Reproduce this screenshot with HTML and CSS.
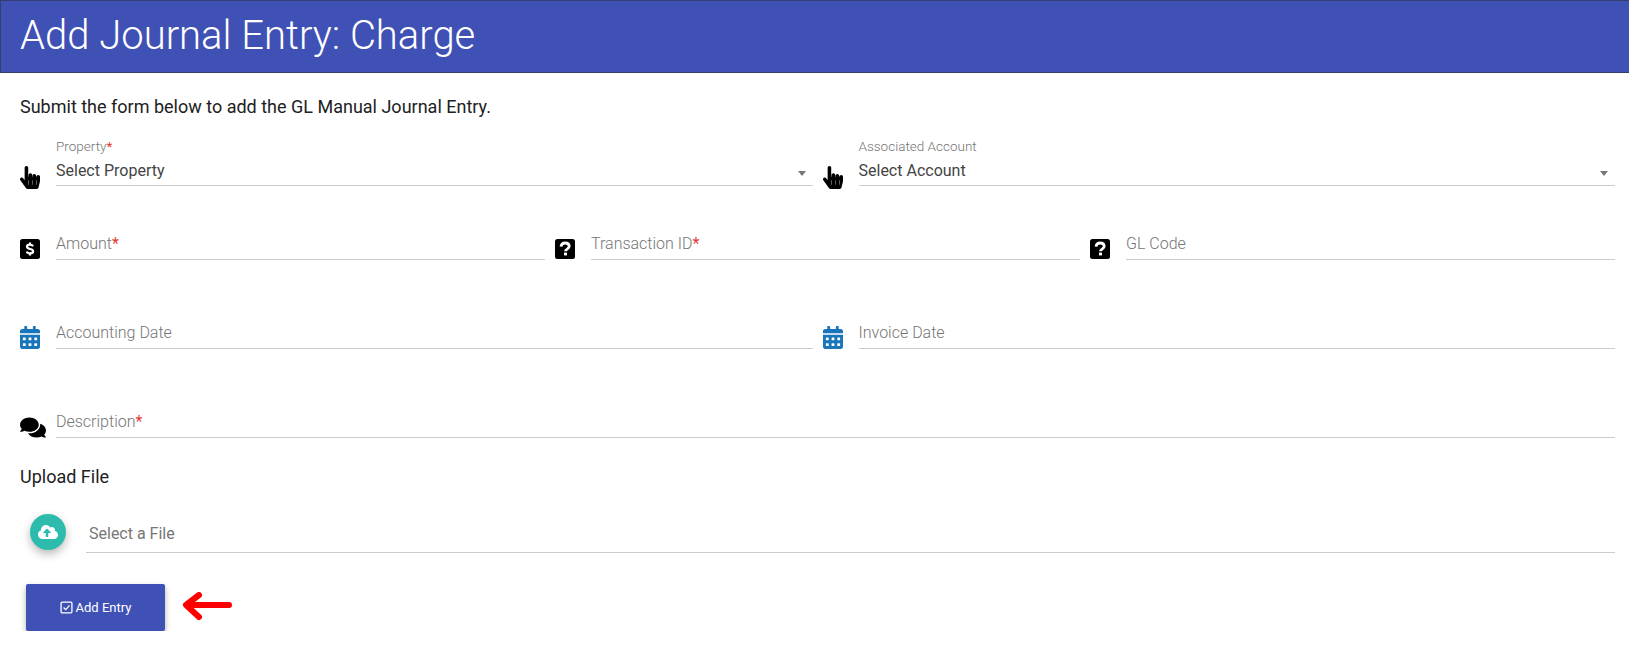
FILE: index.html
```html
<!DOCTYPE html>
<html lang="en">
<head>
    <meta charset="UTF-8">
    <meta name="viewport" content="width=device-width, initial-scale=1.0">
    <title>Add Journal Entry: Charge</title>
    <link rel="stylesheet" href="styles.css">
</head>
<body>
    <svg class="icon-defs" width="0" height="0">
        <symbol id="i-hand" viewBox="0 0 448 512"><path d="M448 240v96c0 3.084-.356 6.159-1.063 9.162l-32 136C410.686 499.23 394.562 512 376 512H168a40.004 40.004 0 0 1-32.35-16.473l-127.997-176c-12.993-17.866-9.043-42.883 8.822-55.876 17.867-12.994 42.884-9.043 55.877 8.823L104 315.992V40c0-22.091 17.908-40 40-40s40 17.909 40 40v200h8v-40c0-22.091 17.908-40 40-40s40 17.909 40 40v40h8v-24c0-22.091 17.908-40 40-40s40 17.909 40 40v24h8c0-22.091 17.908-40 40-40s40 17.909 40 40zm-256 80h-8v96h8v-96zm88 0h-8v96h8v-96zm88 0h-8v96h8v-96z"/></symbol>
        <symbol id="i-calendar" viewBox="0 0 448 512"><path d="M0 464c0 26.5 21.5 48 48 48h352c26.5 0 48-21.5 48-48V192H0v272zm320-196c0-6.6 5.4-12 12-12h40c6.6 0 12 5.4 12 12v40c0 6.6-5.4 12-12 12h-40c-6.6 0-12-5.4-12-12v-40zm0 128c0-6.6 5.4-12 12-12h40c6.6 0 12 5.4 12 12v40c0 6.6-5.4 12-12 12h-40c-6.6 0-12-5.4-12-12v-40zM192 268c0-6.6 5.4-12 12-12h40c6.6 0 12 5.4 12 12v40c0 6.6-5.4 12-12 12h-40c-6.6 0-12-5.4-12-12v-40zm0 128c0-6.6 5.4-12 12-12h40c6.6 0 12 5.4 12 12v40c0 6.6-5.4 12-12 12h-40c-6.6 0-12-5.4-12-12v-40zM64 268c0-6.6 5.4-12 12-12h40c6.6 0 12 5.4 12 12v40c0 6.6-5.4 12-12 12H76c-6.6 0-12-5.4-12-12v-40zm0 128c0-6.6 5.4-12 12-12h40c6.6 0 12 5.4 12 12v40c0 6.6-5.4 12-12 12H76c-6.6 0-12-5.4-12-12v-40zM400 64h-48V16c0-8.8-7.2-16-16-16h-32c-8.8 0-16 7.2-16 16v48H160V16c0-8.8-7.2-16-16-16h-32c-8.8 0-16 7.2-16 16v48H48C21.5 64 0 85.5 0 112v48h448v-48c0-26.5-21.5-48-48-48z"/></symbol>
        <symbol id="i-dollar" viewBox="0 0 20 20"><rect width="20" height="20" rx="2.5"/><path d="M13 7.400C12.600 6.200 11.500 5.600 10 5.600c-1.700 0-3 .8-3 2.200 0 3 6.100 1.500 6.100 4.400 0 1.400-1.400 2.200-3.100 2.200-1.600 0-2.800-.6-3.200-1.900M10 3.500v2M10 14.500v2" fill="none" stroke="#fff" stroke-width="2.200"/></symbol>
        <symbol id="i-question" viewBox="0 0 20 20"><rect width="20" height="20" rx="2.500"/><path d="M6 7.700C6.300 5.300 8 4 10.200 4c2.300 0 4 1.300 4 3.300 0 2.900-3.700 2.700-3.700 5" fill="none" stroke="#fff" stroke-width="2.800"/><rect x="9" y="13.600" width="3" height="2.800" fill="#fff"/></symbol>
    </svg>

    <div class="page-header">
        <h1>Add Journal Entry: Charge</h1>
    </div>

    <div class="content">
        <p class="intro">Submit the form below to add the GL Manual Journal Entry.</p>

        <div class="row row-select cols-2">
            <div class="field">
                <svg class="icon icon-hand"><use href="#i-hand"/></svg>
                <div class="control select">
                    <span class="small-label">Property<span class="req">*</span></span>
                    <span class="select-value">Select Property</span>
                    <span class="caret"></span>
                </div>
            </div>
            <div class="field">
                <svg class="icon icon-hand"><use href="#i-hand"/></svg>
                <div class="control select">
                    <span class="small-label">Associated Account</span>
                    <span class="select-value">Select Account</span>
                    <span class="caret"></span>
                </div>
            </div>
        </div>

        <div class="row row-short cols-3">
            <div class="field">
                <svg class="icon icon-square"><use href="#i-dollar"/></svg>
                <div class="control">Amount<span class="req">*</span></div>
            </div>
            <div class="field">
                <svg class="icon icon-square"><use href="#i-question"/></svg>
                <div class="control">Transaction ID<span class="req">*</span></div>
            </div>
            <div class="field">
                <svg class="icon icon-square"><use href="#i-question"/></svg>
                <div class="control">GL Code</div>
            </div>
        </div>

        <div class="row cols-2">
            <div class="field">
                <svg class="icon icon-calendar"><use href="#i-calendar"/></svg>
                <div class="control">Accounting Date</div>
            </div>
            <div class="field">
                <svg class="icon icon-calendar"><use href="#i-calendar"/></svg>
                <div class="control">Invoice Date</div>
            </div>
        </div>

        <div class="row">
            <div class="field">
                <svg class="icon icon-comments" viewBox="0 0 576 512"><path d="M416 192c0-88.4-93.1-160-208-160S0 103.6 0 192c0 34.3 14.1 65.9 38 92-13.4 30.2-35.5 54.2-35.8 54.5-2.2 2.3-2.8 5.7-1.5 8.7S4.800 352 8 352c36.6 0 66.9-12.3 88.7-25 32.2 15.7 70.3 25 111.3 25 114.9 0 208-71.6 208-160zm122 220c23.9-26 38-57.7 38-92 0-66.9-53.5-124.2-129.3-148.1.9 6.6 1.3 13.3 1.3 20.1 0 105.9-107.7 192-240 192-10.8 0-21.3-.8-31.7-1.9C207.8 439.6 281.8 480 368 480c41 0 79.1-9.2 111.3-25 21.8 12.7 52.1 25 88.7 25 3.2 0 6.1-1.9 7.3-4.8 1.3-2.9.7-6.3-1.5-8.7-.3-.3-22.4-24.2-35.8-54.5z"/></svg>
                <div class="control">Description<span class="req">*</span></div>
            </div>
        </div>

        <h4 class="upload-title">Upload File</h4>

        <div class="upload-row">
            <div class="upload-btn">
                <svg viewBox="0 0 640 512"><path d="M537.6 226.6c4.1-10.7 6.4-22.4 6.4-34.6 0-53-43-96-96-96-19.7 0-38.1 6-53.3 16.2C367 64.2 315.3 32 256 32c-88.4 0-160 71.6-160 160 0 2.7.1 5.4.2 8.1C40.2 219.8 0 273.2 0 336c0 79.5 64.5 144 144 144h368c70.7 0 128-57.3 128-128 0-61.9-44-113.6-102.4-125.4zM393.4 288H328v112c0 8.8-7.2 16-16 16h-48c-8.8 0-16-7.2-16-16V288h-65.4c-14.3 0-21.4-17.2-11.3-27.3l105.4-105.4c6.2-6.2 16.4-6.2 22.6 0l105.4 105.4c10.100 10.100 2.900 27.300-11.300 27.300z"/></svg>
            </div>
            <div class="control file-name">Select a File</div>
        </div>

        <div class="actions">
            <button class="btn-primary">
                <svg class="check" viewBox="0 0 12 12"><rect x="1" y="1" width="10" height="10" rx="1"/><path d="M3.300 6l2 2 3.500-4"/></svg>
                Add Entry
            </button>
            <svg class="red-arrow" viewBox="0 0 50 32"><path d="M47 13H5M17 3L4 13l13 12"/></svg>
        </div>
    </div>
</body>
</html>
```

FILE: styles.css
```css
* {
    box-sizing: border-box;
}

body {
    margin: 0;
    font-family: Roboto, "Liberation Sans", sans-serif;
    font-size: 16px;
    color: #212121;
    background-color: #fff;
}

.icon-defs {
    display: block;
    height: 0;
}

.page-header {
    height: 73px;
    padding-left: 19px;
    background-color: #3f51b5;
    border: 1px solid #33406f;
    border-right: none;
}

.page-header h1 {
    margin: 0;
    font-size: 40px;
    font-weight: 300;
    line-height: 69px;
    color: #fff;
}

.content {
    padding: 0 14px 0 20px;
}

.intro {
    margin: 0;
    padding-top: 24px;
    line-height: 20px;
    font-size: 18px;
    color: #212121;
}

.row {
    display: grid;
    grid-template-columns: 1fr;
    column-gap: 10px;
    height: 89px;
    align-items: end;
}

.row-select {
    height: 69px;
}

.row-short {
    height: 74px;
}

.cols-2 {
    grid-template-columns: repeat(2, 1fr);
}

.cols-3 {
    grid-template-columns: repeat(3, 1fr);
}

.field {
    display: flex;
    align-items: flex-end;
}

.icon {
    flex: none;
    display: block;
    fill: #000;
}

.icon-hand {
    width: 20px;
    height: 23px;
    margin: 0 16px -3px 0;
}

.icon-square {
    width: 20px;
    height: 20px;
    margin: 0 16px 1px 0;
}

.icon-calendar {
    width: 20px;
    height: 23px;
    margin: 0 16px 0 0;
    fill: #1976bb;
}

.icon-comments {
    width: 26px;
    height: 23px;
    margin: 0 10px -1px 0;
}

.control {
    flex: 1;
    min-width: 0;
    height: 36px;
    padding-top: 5px;
    line-height: 30px;
    font-weight: 300;
    color: #757575;
    border-bottom: 1px solid #ccc;
}

.req {
    color: #e53935;
    font-weight: 400;
}

.select {
    position: relative;
    height: 51px;
    padding-top: 3px;
    display: flex;
    flex-direction: column;
}

.small-label {
    font-size: 13.5px;
    font-weight: 300;
    line-height: 16px;
    color: #757575;
}

.select-value {
    margin-top: 2px;
    line-height: 29px;
    font-weight: 400;
    color: #444;
}

.caret {
    position: absolute;
    right: 7px;
    top: 36px;
    width: 0;
    height: 0;
    border-left: 4px solid transparent;
    border-right: 4px solid transparent;
    border-top: 5px solid #777;
}

.upload-title {
    margin: 0;
    padding-top: 28px;
    font-size: 18px;
    font-weight: 400;
    line-height: 22px;
    color: #212121;
}

.upload-row {
    display: flex;
    align-items: flex-end;
    margin-top: 26px;
}

.upload-btn {
    flex: none;
    display: flex;
    align-items: center;
    justify-content: center;
    width: 36px;
    height: 36px;
    margin: 0 20px 3px 10px;
    border-radius: 50%;
    background-color: #2cbbac;
    box-shadow: 0 4px 10px rgba(0, 0, 0, 0.28);
}

.upload-btn svg {
    width: 20px;
    height: 16px;
    fill: #fff;
}

.control.file-name {
    padding-top: 2px;
    padding-left: 3px;
    font-weight: 400;
    color: #777;
}

.actions {
    display: flex;
    align-items: center;
    margin-top: 31px;
    padding-left: 6px;
}

.btn-primary {
    display: flex;
    align-items: center;
    justify-content: center;
    gap: 3px;
    width: 139px;
    height: 47px;
    font-family: inherit;
    font-size: 13px;
    color: #fff;
    background-color: #3f51b5;
    border: none;
    border-radius: 2px;
    box-shadow: 0 3px 6px rgba(0, 0, 0, 0.3);
}

.check {
    width: 13px;
    height: 13px;
    fill: none;
    stroke: #fff;
    stroke-width: 1.2;
}

.red-arrow {
    width: 50px;
    height: 32px;
    margin-left: 17px;
    fill: none;
    stroke: #f00;
    stroke-width: 6;
    stroke-linecap: round;
    stroke-linejoin: round;
}
```
